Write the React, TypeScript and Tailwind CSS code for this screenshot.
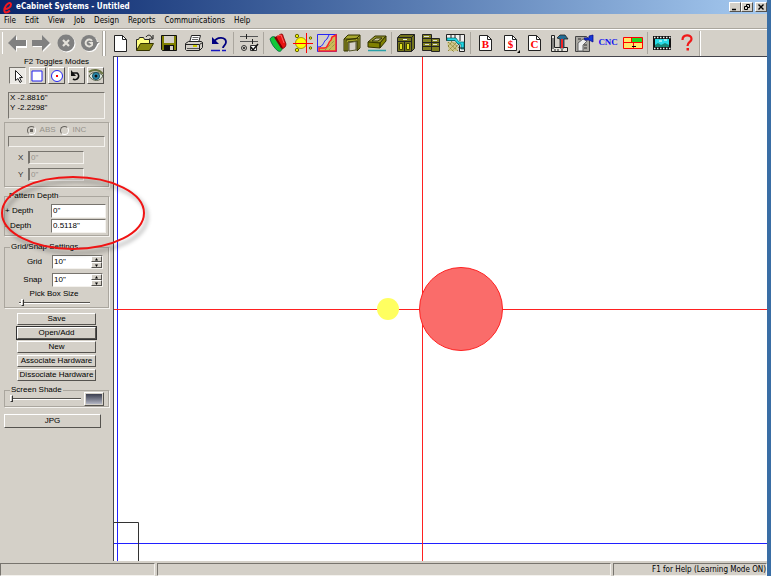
import { useState } from 'react';
import type { ReactNode } from 'react';
import clsx from 'clsx';

const RAISED = 'border border-t-white border-l-white border-r-[#55534f] border-b-[#55534f] bg-[#d4d0c8]';
const SUNKEN = 'border border-t-[#77746e] border-l-[#77746e] border-r-[#f4f2ee] border-b-[#f4f2ee]';
const GROUP = 'min-w-0 border border-[#aaa69e] shadow-[1px_1px_0_#f4f2ee]';

const MENUS = ['File', 'Edit', 'View', 'Job', 'Design', 'Reports', 'Communications', 'Help'];

function Icon({ children }: { children: ReactNode }) {
  return (
    <svg width="20" height="20" viewBox="0 0 20 20" fill="none" className="shrink-0" aria-hidden="true">
      {children}
    </svg>
  );
}

function Page({ letter, more }: { letter: string; more?: boolean }) {
  return (
    <Icon>
      <path d="M4.5 2.5h8l4 4v11h-12z" fill="#fff" stroke="#222" />
      <path d="M12.5 2.5v4h4" stroke="#222" />
      <text x="10.5" y="15" textAnchor="middle" fontSize="11" fontWeight="bold" fontFamily="Liberation Serif, serif" fill="#f00">
        {letter}
      </text>
      {more && <path d="M20 17v3h-3z" fill="#000" />}
    </Icon>
  );
}

const NAV_TOOLS = [
  { name: 'Back', icon: <Icon><path d="M2 11l8-8v4h10v8H10v4z" fill="#fff" /><path d="M1 10l8-8v5h10v6H9v5z" fill="#808080" /></Icon> },
  { name: 'Forward', icon: <Icon><path d="M20 11l-8-8v5H2v6h10v5z" fill="#fff" /><path d="M19 10l-8-8v5H1v6h10v5z" fill="#808080" /></Icon> },
  { name: 'Stop', icon: <Icon><circle cx="11" cy="11" r="8.500" fill="#fff" /><circle cx="10" cy="10" r="8.500" fill="#808080" /><path d="M7 7l6 6M13 7l-6 6" stroke="#e4e1da" strokeWidth="2.200" /></Icon> },
  { name: 'Refresh', icon: <Icon><circle cx="10" cy="11" r="8" fill="#fff" /><path d="M10 10h10l-5 6z" fill="#fff" /><circle cx="9" cy="10" r="8" fill="#808080" /><path d="M9 9h10l-5 6z" fill="#808080" /><path d="M12 8a3.500 3.500 0 1 0 0 4" stroke="#e4e1da" strokeWidth="2" /><path d="M8 9h5v4z" fill="#e4e1da" /></Icon> },
];

const FILE_TOOLS = [
  { name: 'New', icon: <Icon><path d="M4.500 2.500h8l4 4v12h-12z" fill="#fff" stroke="#222" /><path d="M12.500 2.500v4h4" stroke="#222" /></Icon> },
  { name: 'Open', icon: <Icon><path d="M1.500 17V6.500h2l1-2h4l1 2h5V10" fill="#ffff80" stroke="#222" /><path d="M1.500 17.500l4-7h13l-4 7z" fill="#8a8a10" stroke="#333300" /><path d="M11 4c2-3 5-2 6 1M18 2v4h-4" stroke="#111" /></Icon> },
  { name: 'Save', icon: <Icon><path d="M2.500 2.500h15v15h-14l-1-1z" fill="#808000" stroke="#111" /><path d="M5 3h10v7H5z" fill="#d4d0c8" /><path d="M5 12h10v6H5z" fill="#111" /><path d="M11 13h3v4h-3z" fill="#d4d0c8" /></Icon> },
  { name: 'Print', icon: <Icon><path d="M5.500 9.500l2-7h9l-2 7" fill="#fff" stroke="#222" /><path d="M8.500 4.500h6M8 6.500h6" stroke="#666" /><path d="M1.500 10.500l3-2h13l1 1v5l-3 3h-13l-1-1z" fill="#d4d0c8" stroke="#222" /><path d="M2 11.500h13.500l3-2M15.500 12v5" stroke="#222" /><path d="M3 15.500h12" stroke="#555" /><path d="M9 13h4" stroke="#cc0" strokeWidth="2" /></Icon> },
  { name: 'Undo', icon: <Icon><path d="M5 9c3-6 12-5 12 0 0 3-3 4-3 6" stroke="#000080" strokeWidth="1.800" /><path d="M3 4v7h7z" fill="#000080" /><path d="M2 17.500h9M13 17.500h4" stroke="#1818c0" strokeWidth="1.500" /></Icon> },
];

const OPTION_TOOLS = [
  { name: 'Settings', icon: <Icon><path d="M1 3.500h18M1 8.500h18" stroke="#555" /><path d="M7.500 1v5M13.500 6v5" stroke="#222" /><circle cx="5" cy="15" r="2.500" stroke="#333" /><circle cx="5" cy="15" r="1" fill="#111" /><path d="M11.500 12.500h6v5h-6z" stroke="#333" fill="#fff" /><path d="M12 14l2 3 5-6" stroke="#111" strokeWidth="1.500" /></Icon> },
];

const DESIGN_TOOLS = [
  { name: 'Materials', icon: <Icon><path d="M8 4l5-3c2 0 2 1 2 2l3 8c0 3-2 4-4 5z" fill="#e81212" stroke="#700" strokeWidth=".8" /><path d="M2 6c1-2 3-3 5-2l7 11c0 3-2 4-4 3C6 15 3 10 2 6z" fill="#12c83a" stroke="#064" strokeWidth=".8" /><path d="M7 4l7 11" stroke="#700" strokeWidth="2" /><path d="M9 3l4-1 3 8" stroke="#ff6060" /></Icon> },
  { name: 'Center', icon: <Icon><circle cx="8" cy="10" r="5.500" fill="#ff0" stroke="#a90" /><g fill="#ee0" stroke="#660"><circle cx="4" cy="3" r="1.700" /><circle cx="4" cy="17" r="1.700" /><circle cx="17.500" cy="5" r="1.200" /><circle cx="17.500" cy="15" r="1.200" /></g><path d="M0 10.500h20M13.500 0v20" stroke="#f00" /></Icon> },
  { name: 'Profile', icon: <Icon><path d="M.5 1.500h19v17H.5z" fill="#d4d0c8" stroke="#2626f5" /><path d="M2 18v-3h5c5 0 3-5 7-8l1-3 4-2v16z" fill="#c9bc58" /><path d="M1 14c6 0 5-6 9-8l2-4" stroke="#22f" /><path d="M2 18v-3h5c5 0 3-5 7-8l1-3 4-2v16z" stroke="#f22" strokeWidth="1.500" /><path d="M8 17l9-9M12 17l6-6" stroke="#887f40" strokeDasharray="1 1" /></Icon> },
  { name: 'Door', icon: <Icon><path d="M2 6l4-4h12v13l-3 3V8L6 9v9H2z" fill="#a8a82e" stroke="#333300" /><path d="M4 18V7l12-2v12M2 6h12l4-4" stroke="#333300" /><path d="M7 9.500l7-1V17l-7 1z" fill="#d4d0c8" stroke="#55552a" /></Icon> },
  { name: 'Drawer', icon: <Icon><path d="M1 9l7-6h11l-6 7z" fill="#99992c" stroke="#333300" /><path d="M1 9v5l12 1v-5zM13 10l6-7v5l-6 7z" fill="#808000" stroke="#333300" /><path d="M5 8l4-3h6l-4 3z" fill="#c9c69f" stroke="#333300" /><path d="M1 17.500h18" stroke="#2aa0a8" strokeWidth="1.500" /></Icon> },
];

const CABINET_TOOLS = [
  { name: 'Cabinet', icon: <Icon><path d="M1.500 4.500l3-3h14v14l-3 3h-14z" fill="#74741a" stroke="#222" /><path d="M2 4.500h13.500v14M15.500 4.500l3-3M2 8.500h13.500M8.500 8.500v10" stroke="#222" /><path d="M3.500 10.500h3v6h-3zM10.500 10.500h3v6h-3z" fill="#e0e020" stroke="#444400" /><path d="M7 6.500h4" stroke="#eee" /></Icon> },
  { name: 'Room', icon: <Icon><path d="M1.500 1.500h9v16h-9zM10.500 5.500h8v13h-8z" fill="#808020" stroke="#222" /><path d="M2 5.500h8M2 9.500h8M2 13.500h8M11 9.500h7M11 13.500h7" stroke="#222" /><path d="M3 3.500h5M12 7.500h4M12 11.500h4M4 11.500h4" stroke="#ddd" /></Icon> },
  { name: 'Layout', icon: <Icon><path d="M1 9h9l2 9H3z" fill="#cfc78c" /><path d="M2 9l10 9M5 8l8 7M2 13l6 6M2 18L11 9M6 18l6-6M2 13l4-4" stroke="#8f8638" strokeDasharray="2 1" /><path d="M.5 1.500h18v17h-5v-6l-4-5h-9z" fill="#eee" stroke="#222" /><path d="M1 5h9l3 4h5v7h-3v-5h-3L9 7.500H1z" fill="#20d8e8" stroke="#066" strokeWidth=".7" /><path d="M5 2v3M9 2v3M14 2v6M14 15h4" stroke="#222" /></Icon> },
];

const OUTPUT_TOOLS = [
  { name: 'Buy list', icon: <Page letter="B" /> },
  { name: 'Cost', icon: <Page letter="$" more /> },
  { name: 'Cut list', icon: <Page letter="C" /> },
  { name: 'Assembly', icon: <Icon><path d="M2.500 2.500h3v12h13v4h-16z" fill="#e8e6df" stroke="#222" /><path d="M8 5l3-3h5l3 4h-4v9h-4V6z" fill="#246c94" stroke="#222" strokeWidth=".8" /><path d="M13 6v9" stroke="#e22" strokeWidth="2" /><path d="M4 5v11M6 16v2M9 16v2M13 16v2" stroke="#222" /></Icon> },
  { name: 'Machine', icon: <Icon><path d="M1.500 3.500h11l3 4v11h-14z" fill="#aaa8a2" stroke="#444" /><path d="M4 18v-8l5-4 4 2-4 4v6z" fill="#eee" stroke="#666" /><path d="M10 5h5V3l4-1v7l-4-2h-4z" fill="#1538d8" stroke="#008" strokeWidth=".7" /><path d="M10 12h3M10 15h3M4 6h3" stroke="#333" /></Icon> },
  { name: 'CNC', icon: <span className="font-['Liberation_Serif',serif] text-[9px] font-bold text-[#1010f0]">CNC</span> },
  { name: 'Nesting', icon: <Icon><path d="M.5 4.500h19v11H.5z" fill="#ffe96a" stroke="#f00" /><path d="M9 5h10v4H9z" fill="#1edb1e" /><path d="M1 9.500h18M8.500 5v5M10.500 10v5" stroke="#f00" /><path d="M9 13.500h4" stroke="#000" /></Icon> },
];

const HELP_TOOLS = [
  { name: 'Video', icon: <Icon><path d="M1 3h18v14H1z" fill="#111" /><path d="M2 4.500h17M2 15.500h17" stroke="#eee" strokeWidth="1.500" strokeDasharray="1.500 1.500" /><path d="M3 6h14v8H3z" fill="#28dce8" /><path d="M3 14v-2l3-2 3 2 4-2 4 2v2z" fill="#188878" /><path d="M7 8h3M12 7h3" stroke="#fff" /></Icon> },
  { name: 'Help', icon: <Icon><path d="M5.500 7c0-6 9-6 9-1 0 3-4 3-4 7" stroke="#f01818" strokeWidth="2.200" /><path d="M9.500 15H12v2.500H9.500z" fill="#f01818" /></Icon> },
];

const MODES = [
  { name: 'Select', icon: <path d="M5.500 2.500v10l2.500-2 2 4 1.500-1-2-4h3z" fill="#fff" stroke="#222" /> },
  { name: 'Rectangle', icon: <path d="M3 3h10v10H3z" fill="#fff" stroke="#2222f0" /> },
  { name: 'Circle', icon: <><circle cx="8" cy="8" r="5.500" fill="#fff" stroke="#2222f0" /><path d="M7 7h2v2H7z" fill="#f00" /></> },
  { name: 'Rotate', icon: <><path d="M5 5h4a3.500 3.500 0 1 1-4 6" stroke="#111" strokeWidth="1.700" /><path d="M3 2v6h5z" fill="#111" /></> },
  { name: 'View', icon: <><path d="M1 8c3-5 10-5 14 0-3 6-10 6-14 0z" fill="#d9e4dd" stroke="#55604a" /><path d="M1 4c4-3 10-3 14 2" stroke="#687340" strokeWidth="2" /><circle cx="8" cy="8" r="3.500" fill="#2b91b5" stroke="#144a5c" /><circle cx="8" cy="8" r="1.500" fill="#111" /></> },
];

const ACTIONS = ['Save', 'Open/Add', 'New', 'Associate Hardware', 'Dissociate Hardware'];

type Tool = { name: string; icon: ReactNode };

function ToolGroup({ tools, className }: { tools: Tool[]; className: string }) {
  return (
    <div className={clsx('grid shrink-0', className)}>
      {tools.map((tool) => (
        <button key={tool.name} type="button" aria-label={tool.name} className="flex h-6 items-center justify-center">
          {tool.icon}
        </button>
      ))}
    </div>
  );
}

function Separator() {
  return <div className="mx-[2px] h-[22px] w-px shrink-0 bg-[#aaa69e]" />;
}

function AxisField({ label }: { label: string }) {
  return (
    <label className="mt-1 flex h-[13px] items-center gap-[3px] pl-[10px] text-[#333]">
      <span className="w-[7px]">{label}</span>
      <input disabled defaultValue={'0"'} className={clsx(SUNKEN, 'h-[13px] w-[56px] border-l-2 px-px text-[#96938c]')} />
    </label>
  );
}

function DepthField({ label, value }: { label: string; value: string }) {
  return (
    <label className="flex h-[15px] items-center">
      <span className="w-[46px]">{label}</span>
      <input defaultValue={value} className={clsx(SUNKEN, 'h-[14px] w-[55px] bg-white px-px')} />
    </label>
  );
}

function Spinner({ label, value, onChange }: { label: string; value: number; onChange: (value: number) => void }) {
  return (
    <div className="mb-1 flex h-[14px] items-center justify-end gap-[10px] pr-[5px]">
      <label htmlFor={label}>{label}</label>
      <div className={clsx(SUNKEN, 'flex h-[14px] w-[51px] bg-white')}>
        <input id={label} readOnly value={`${value}"`} className="w-0 flex-1 px-px" />
        <div className="flex w-[11px] flex-col">
          <button type="button" aria-label={`Increase ${label}`} onClick={() => onChange(value + 1)} className={clsx(RAISED, 'flex flex-1 items-center justify-center')}>
            <svg width="5" height="3"><path d="M1 2.500L2.500 0 4 2.500z" /></svg>
          </button>
          <button type="button" aria-label={`Decrease ${label}`} onClick={() => onChange(value - 1)} className={clsx(RAISED, 'flex flex-1 items-center justify-center')}>
            <svg width="5" height="3"><path d="M1 .5L2.500 3 4 .5z" /></svg>
          </button>
        </div>
      </div>
    </div>
  );
}

const SLIDER =
  'block h-[7px] appearance-none bg-transparent [&::-webkit-slider-runnable-track]:h-[2px] [&::-webkit-slider-runnable-track]:border-b [&::-webkit-slider-runnable-track]:border-white [&::-webkit-slider-runnable-track]:bg-[#55534f] [&::-webkit-slider-thumb]:-mt-[3px] [&::-webkit-slider-thumb]:h-[7px] [&::-webkit-slider-thumb]:w-[3px] [&::-webkit-slider-thumb]:appearance-none [&::-webkit-slider-thumb]:border [&::-webkit-slider-thumb]:border-white [&::-webkit-slider-thumb]:border-r-[#333] [&::-webkit-slider-thumb]:border-b-[#333] [&::-webkit-slider-thumb]:bg-[#d4d0c8]';

function Sidebar() {
  const [mode, setMode] = useState('Select');
  const [grid, setGrid] = useState(10);
  const [snap, setSnap] = useState(10);

  return (
    <aside className="relative w-[113px] shrink-0 px-1 font-['Liberation_Sans',sans-serif] text-[8px] leading-[10px]">
      <h2 className="pt-px text-center">F2 Toggles Modes</h2>
      <div className="flex justify-between px-[5px]">
        {MODES.map((item) => (
          <button
            key={item.name}
            type="button"
            aria-label={item.name}
            onClick={() => setMode(item.name)}
            className={clsx('flex size-[17px] items-center justify-center', mode === item.name ? [SUNKEN, 'bg-[#ebe9e4]'] : RAISED)}
          >
            <svg width="16" height="16" viewBox="0 0 16 16" fill="none" className="shrink-0" aria-hidden="true">{item.icon}</svg>
          </button>
        ))}
      </div>

      <div className={clsx(SUNKEN, 'mx-1 mt-2 h-[27px] pl-px')}>
        <p>X -2.8816"</p>
        <p>Y -2.2298"</p>
      </div>

      <div className={clsx(GROUP, 'mt-[3px] h-[65px] px-[3px] pt-px')}>
        <div className="flex h-3 items-center justify-center gap-1 text-[#96938c]">
          {['ABS', 'INC'].map((name) => (
            <label key={name} className="flex items-center gap-1">
              <input
                type="radio"
                name="coordinates"
                disabled
                defaultChecked={name === 'ABS'}
                className="size-[9px] appearance-none rounded-full border border-t-[#66635e] border-r-white border-b-white border-l-[#66635e] checked:bg-[radial-gradient(#66635e_30%,transparent_35%)]"
              />
              {name}
            </label>
          ))}
        </div>
        <input disabled aria-label="Coordinate entry" className={clsx(SUNKEN, 'block h-[11px] w-full')} />
        <AxisField label="X" />
        <AxisField label="Y" />
      </div>

      <fieldset className={clsx(GROUP, 'mt-1 h-[45px] pt-[2px]')}>
        <legend className="ml-[3px] px-px">Pattern Depth</legend>
        <DepthField label="+ Depth" value={'0"'} />
        <DepthField label="- Depth" value={'0.5118"'} />
      </fieldset>

      <fieldset className={clsx(GROUP, 'mt-[6px] h-[66px] pt-[3px]')}>
        <legend className="ml-[5px] px-px">Grid/Snap Settings</legend>
        <Spinner label="Grid" value={grid} onChange={setGrid} />
        <Spinner label="Snap" value={snap} onChange={setSnap} />
        <label className="-mt-[2px] block pr-[5px] text-center">
          Pick Box Size
          <input type="range" defaultValue={4} className={clsx(SLIDER, 'mx-auto w-[71px]')} />
        </label>
      </fieldset>

      <div className="mt-[5px] flex flex-col gap-[2px] px-[13px]">
        {ACTIONS.map((action) => (
          <button
            key={action}
            type="button"
            className={clsx(RAISED, 'h-[12px] leading-[10px] whitespace-nowrap', action === 'Open/Add' && 'outline outline-[#333]')}
          >
            {action}
          </button>
        ))}
      </div>

      <fieldset className={clsx(GROUP, 'mt-1 h-[22px]')}>
        <legend className="ml-[5px] px-px">Screen Shade</legend>
        <div className="-mt-[3px] flex items-center justify-between pr-1 pl-[5px]">
          <input type="range" aria-label="Screen Shade" defaultValue={0} className={clsx(SLIDER, 'w-[71px]')} />
          <button type="button" aria-label="Shade color" className={clsx(RAISED, 'h-[14px] w-5 p-px')}>
            <span className="block h-full bg-linear-to-b from-[#3c3f50] to-[#b4b7c4]" />
          </button>
        </div>
      </fieldset>

      <button type="button" className={clsx(RAISED, 'mt-[7px] block h-[14px] w-[97px]')}>JPG</button>

      {/* callout ring around the depth fields */}
      <svg width="154" height="84" fill="none" className="pointer-events-none absolute top-[116px] left-0 z-10 drop-shadow-[3px_4px_2px_rgba(0,0,0,0.4)]" aria-hidden="true">
        <ellipse cx="73" cy="41" rx="71" ry="36" stroke="#f01414" strokeWidth="2" />
      </svg>
    </aside>
  );
}

function Canvas() {
  return (
    <main className="min-w-0 flex-1 border-t border-l border-[#44444c] bg-white">
      <svg className="block h-full w-full" aria-label="Pattern drawing">
        <rect x="3" y="0" width="1" height="100%" fill="#2020ff" />
        <rect x="0" y="486" width="100%" height="1" fill="#2020ff" />
        <path d="M0 465.500h24.500V2000" fill="none" stroke="#333" />
        <rect x="0" y="252" width="100%" height="1" fill="#ff2020" />
        <rect x="308" y="0" width="1" height="100%" fill="#ff2020" />
        <circle cx="274" cy="252" r="11" fill="#ffff60" />
        <circle cx="347" cy="252" r="41.500" fill="#fa6c6a" stroke="#ff2020" />
      </svg>
    </main>
  );
}

function WindowButton({ name, children }: { name: string; children: ReactNode }) {
  return (
    <button type="button" aria-label={name} className={clsx(RAISED, 'flex h-[10px] w-3 items-center justify-center')}>
      <svg width="8" height="8" viewBox="0 0 8 8" fill="none" stroke="#000" className="shrink-0">{children}</svg>
    </button>
  );
}

export default function App() {
  return (
    <div className="flex min-h-screen flex-col border-r-4 border-[#3a6ea5] bg-[#d4d0c8] font-['DejaVu_Sans_Condensed','DejaVu_Sans',sans-serif] text-[8px] text-black">
      <header className="flex h-[14px] items-center bg-linear-to-r from-[#0a246a] to-[#a6caf0] pl-[2px]">
        <svg width="11" height="13" viewBox="0 0 11 13" fill="none" aria-hidden="true">
          <path d="M3 8c3 0 6-2 6-4.500C9 1 6 1.500 4 4.500S1.500 11 4 11.500c2 0 3-1 4-2" stroke="#f01820" strokeWidth="2" />
        </svg>
        <h1 className="ml-[3px] flex-1 font-bold text-white">eCabinet Systems - Untitled</h1>
        <WindowButton name="Minimize"><path d="M1 6.500h4" strokeWidth="1.500" /></WindowButton>
        <WindowButton name="Restore"><path d="M3.500 3V1.500h3v3H5M1.500 3.500h3v3h-3z" /></WindowButton>
        <div className="w-[2px]" />
        <WindowButton name="Close"><path d="M1.500 1.500l5 5M6.500 1.500l-5 5" strokeWidth="1.400" /></WindowButton>
      </header>

      <nav className="flex h-[15px] items-center gap-[9px] border-b border-[#aaa69e] pl-1">
        {MENUS.map((menu) => (
          <button key={menu} type="button">{menu}</button>
        ))}
      </nav>

      <div className="flex h-[27px] items-center overflow-hidden border-t border-white" role="toolbar">
        <div className="mx-[2px] h-[22px] w-px shrink-0 bg-white" />
        <ToolGroup tools={NAV_TOOLS} className="w-[97px] grid-cols-4" />
        <div className="mr-[2px] h-[25px] w-[4px] shrink-0 border-x border-x-[#aaa69e] bg-white" />
        <ToolGroup tools={FILE_TOOLS} className="w-[123px] grid-cols-5" />
        <Separator />
        <ToolGroup tools={OPTION_TOOLS} className="w-[25px] grid-cols-1" />
        <Separator />
        <ToolGroup tools={DESIGN_TOOLS} className="w-[123px] grid-cols-5" />
        <Separator />
        <ToolGroup tools={CABINET_TOOLS} className="w-[74px] grid-cols-3" />
        <Separator />
        <ToolGroup tools={OUTPUT_TOOLS} className="w-[172px] grid-cols-7" />
        <Separator />
        <ToolGroup tools={HELP_TOOLS} className="w-[49px] grid-cols-2" />
        <div className="h-[25px] w-[2px] border-r border-l border-r-white border-l-[#aaa69e]" />
      </div>

      <div className="flex flex-1">
        <Sidebar />
        <Canvas />
      </div>

      <footer className="mt-[2px] flex h-[13px] gap-[2px] leading-[12px]">
        <div className={clsx(SUNKEN, 'w-[155px]')} />
        <div className={clsx(SUNKEN, 'flex-1')} />
        <div className={clsx(SUNKEN, 'w-[154px] text-right whitespace-nowrap')}>F1 for Help (Learning Mode ON)</div>
      </footer>
    </div>
  );
}
